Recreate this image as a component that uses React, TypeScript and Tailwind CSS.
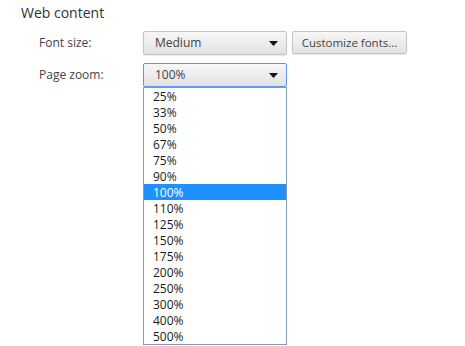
import React from "react";

const zoomLevels = [
	"25%",
	"33%",
	"50%",
	"67%",
	"75%",
	"90%",
	"100%",
	"110%",
	"125%",
	"150%",
	"175%",
	"200%",
	"250%",
	"300%",
	"400%",
	"500%",
];

function Arrow() {
	return (
		<svg width="9" height="5" viewBox="0 0 9 5" className="shrink-0">
			<path d="M0 0H9L4.5 5Z" fill="#111" />
		</svg>
	);
}

function Select({ value, focused }: { value: string; focused?: boolean }) {
	return (
		<div
			className={`w-[144px] h-[24px] flex items-center justify-between pl-[11px] pr-[8px] rounded-[2px] border bg-gradient-to-b from-[#f7f7f7] to-[#e2e2e2] text-[12px] text-[#444] ${
				focused ? "border-[#5b97f0]" : "border-[#c3c3c3] shadow-[0_1px_1px_rgba(0,0,0,0.08)]"
			}`}>
			<span>{value}</span>
			<Arrow />
		</div>
	);
}

export default function App() {
	return (
		<div className="w-[465px] h-[346px] bg-white relative overflow-hidden font-['Open_Sans','Noto_Sans',sans-serif] text-[#333]">
			<div className="pl-[21px] pt-[3px] text-[14px] leading-[20px] text-[#303030]">
				Web content
			</div>
			<div className="pl-[39px] mt-[8px] flex flex-col gap-[8px]">
				<div className="flex items-center h-[24px]">
					<span className="w-[104px] text-[12px] text-[#444]">Font size:</span>
					<Select value="Medium" />
					<button className="ml-[5px] -mt-[1px] w-[115px] h-[23px] rounded-[2px] border border-[#c3c3c3] bg-gradient-to-b from-[#f7f7f7] to-[#e2e2e2] shadow-[0_1px_1px_rgba(0,0,0,0.08)] text-[11.5px] text-[#444]">
						Customize fonts...
					</button>
				</div>
				<div className="flex items-center h-[24px]">
					<span className="w-[104px] text-[12px] text-[#444]">Page zoom:</span>
					<Select value="100%" focused />
				</div>
			</div>
			<ul className="absolute left-[143px] top-[87px] w-[144px] border border-[#7f9db9] bg-white">
				{zoomLevels.map((z) => (
					<li
						key={z}
						className={`h-[16px] leading-[17px] pl-[9px] text-[12px] ${
							z === "100%" ? "bg-[#1e90ff] text-white" : "text-[#1a1a1a]"
						}`}>
						{z}
					</li>
				))}
			</ul>
		</div>
	);
}
